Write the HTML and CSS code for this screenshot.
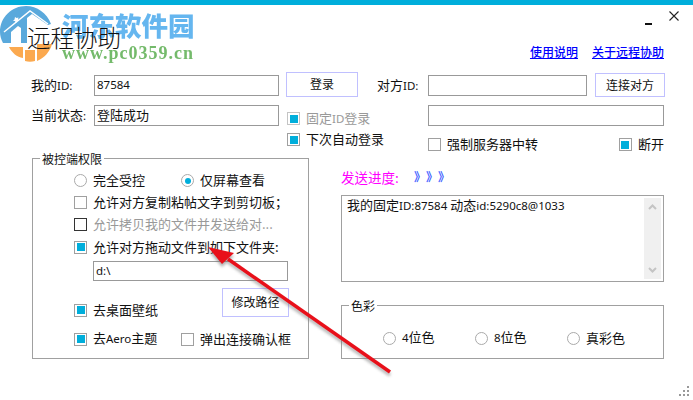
FILE: index.html
```html
<!DOCTYPE html>
<html lang="zh">
<head>
<meta charset="utf-8">
<title>远程协助</title>
<link rel="stylesheet" href="styles.css">
</head>
<body>
<div class="window">
  <div class="topbar"></div>
  <div class="winctl">
    <svg class="ctl-min" width="7" height="2" viewBox="0 0 7 2"><rect width="7" height="2" fill="#111"/></svg>
    <svg class="ctl-close" width="10" height="10" viewBox="0 0 10 10"><path d="M.5.5l9 9M9.500.5l-9 9" stroke="#222" stroke-width="1.100" fill="none"/></svg>
  </div>
  <header class="titlebar">
    <h1 class="title">远程协助</h1>
    <nav class="links"><a class="link" href="#">使用说明</a><a class="link" href="#">关于远程协助</a></nav>
  </header>

  <div class="topform">
    <div class="stack-left">
      <div class="frow">
        <label class="lab lab-left">我的<span class="lat">ID:</span></label>
        <input class="inp inp-left inp-lat" value="87584">
        <button class="btn btn-login">登录</button>
      </div>
      <div class="frow frow-2">
        <label class="lab lab-left">当前状态<span class="lat">:</span></label>
        <input class="inp inp-left" value="登陆成功">
        <div class="checks">
          <div class="opt dim"><span class="box soft on"></span><span>固定<span class="lat">ID</span>登录</span></div>
          <div class="opt"><span class="box on"></span>下次自动登录</div>
        </div>
      </div>
    </div>
    <div class="stack-right">
      <div class="frow">
        <label class="lab lab-right">对方<span class="lat">ID:</span></label>
        <input class="inp inp-peer">
        <button class="btn btn-connect">连接对方</button>
      </div>
      <div class="frow frow-2 indent"><input class="inp inp-wide"></div>
      <div class="force indent">
        <div class="opt"><span class="box"></span>强制服务器中转</div>
        <div class="opt"><span class="box on"></span>断开</div>
      </div>
    </div>
  </div>

  <main class="main">
    <section class="group group-perm">
      <span class="legend">被控端权限</span>
      <div class="prow">
        <div class="opt w107"><span class="radio"></span>完全受控</div>
        <div class="opt"><span class="radio on"></span>仅屏幕查看</div>
      </div>
      <div class="prow"><div class="opt"><span class="box"></span>允许对方复制粘帖文字到剪切板；</div></div>
      <div class="prow"><div class="opt dim"><span class="box dark"></span>允许拷贝我的文件并发送给对...</div></div>
      <div class="prow prow-gap"><div class="opt"><span class="box on"></span>允许对方拖动文件到如下文件夹:</div></div>
      <input class="inp inp-path inp-lat" value="d:\">
      <div class="pathrow">
        <div class="opt opt-low"><span class="box on"></span>去桌面壁纸</div>
        <button class="btn btn-path">修改路径</button>
      </div>
      <div class="prow prow-last">
        <div class="opt w107"><span class="box on"></span><span>去<span class="lat">Aero</span>主题</span></div>
        <div class="opt"><span class="box"></span>弹出连接确认框</div>
      </div>
    </section>

    <div class="side">
      <div class="progress"><span class="progress-label">发送进度:</span><span class="chev">》</span><span class="chev">》</span><span class="chev">》</span></div>
      <div class="log">
        <div class="log-text">我的固定<span class="lat">ID:87584 </span>动态<span class="lat">id:5290c8@1033</span></div>
        <div class="scroll">
          <svg width="9" height="6" viewBox="0 0 9 6"><path d="M1 5l3.500-3.500L8 5" stroke="#c4c4c4" stroke-width="2" fill="none"/></svg>
          <svg width="9" height="6" viewBox="0 0 9 6"><path d="M1 1l3.500 3.500L8 1" stroke="#c4c4c4" stroke-width="2" fill="none"/></svg>
        </div>
      </div>
      <section class="group group-color">
        <span class="legend">色彩</span>
        <div class="opt c92"><span class="radio"></span><span><span class="lat">4</span>位色</span></div>
        <div class="opt c92"><span class="radio"></span><span><span class="lat">8</span>位色</span></div>
        <div class="opt"><span class="radio"></span>真彩色</div>
      </section>
    </div>
  </main>

  <svg class="grip" width="10" height="10" viewBox="0 0 10 10"><path d="M8 0h2v2H8zM4 4h2v2H4zM8 4h2v2H8zM0 8h2v2H0zM4 8h2v2H4zM8 8h2v2H8z" fill="#999"/></svg>

  <div class="watermark">
    <svg class="wm-logo" width="54" height="64" viewBox="0 0 54 64">
      <path d="M3 43C1 39 0 36 0 32 0 17 12 6 26 6c11 0 21 7 25 18l-3 1-16-11-5 4v25z" fill="#5aa9dc"/>
      <path d="M4 32L30 11l18 13" stroke="#fff" stroke-width="1.500" fill="none"/>
      <path d="M11 43V32l7-6 3 2v15z" fill="#fff"/>
      <path d="M15 17l1.500 1 2-.5-.5 2 1 1.500-2 0-1 2-1-2-2 0 1.500-1.500z" fill="#fff"/>
      <path d="M9 47h14v11C17 57 12 53 9 47zM25 50h10v11c-3 1-7 1-10 0zM37 44h15c-2 8-8 14-15 17z" fill="#fba94f"/>
    </svg>
    <div class="wm-text">
      <span class="wm-cn">河东软件园</span>
      <span class="wm-url">www.pc0359.cn</span>
    </div>
  </div>

  <svg class="arrow" width="693" height="400" viewBox="0 0 693 400">
    <defs><filter id="blur" x="-10%" y="-10%" width="120%" height="120%"><feGaussianBlur stdDeviation="1.500"/></filter></defs>
    <g transform="translate(0 3)" filter="url(#blur)" fill="#777" stroke="#777" opacity=".6">
      <path d="M390 372L228 259" stroke-width="3" fill="none"/>
      <path d="M208 247l26 6-12 11z" stroke="none"/>
    </g>
    <path d="M390 372L228 259" stroke="#e8101a" stroke-width="3.500" fill="none"/>
    <path d="M208 247l26 6-12 11z" fill="#e8101a"/>
  </svg>
</div>
</body>
</html>
```

FILE: styles.css
```css
* { box-sizing: border-box; }
html, body { margin: 0; padding: 0; background: #fff; }
body {
  font-family: "Noto Sans CJK SC", "Noto Sans", sans-serif;
  font-size: 13px;
  color: #111;
}
.lat { font-family: "Noto Sans", sans-serif; font-size: 11.500px; }
.window { position: relative; width: 693px; height: 400px; overflow: hidden; }
.topbar { height: 5px; background: #00aedb; }
.winctl { display: flex; align-items: flex-start; justify-content: flex-end; height: 20px; padding: 6px 14px 0 0; gap: 17px; }
.ctl-min { flex: none; margin-top: 12px; }
.titlebar { display: flex; height: 47px; padding-right: 29px; }
.title { position: relative; z-index: 1; margin: -2px 0 0 27px; font-size: 23.500px; font-weight: 300; line-height: 28px; color: #111; }
.links { margin-left: auto; display: flex; gap: 14px; padding-top: 19px; }
.link { font-size: 12px; line-height: 16px; color: #0000ff; text-decoration: underline; font-weight: 500; }

.topform { display: flex; padding-left: 31px; }
.stack-left { flex: none; width: 346px; }
.frow { display: flex; align-items: flex-start; }
.frow-2 { margin-top: 8px; }
.lab { flex: none; display: block; width: 63px; line-height: 21px; margin-top: 2px; white-space: nowrap; }
.lab-right { width: 51px; }
.frow-2 .lab { margin-top: -1px; }
.inp {
  flex: none; display: block; height: 21px; margin: 3px 0 0; padding: 0 2px 3px;
  border: 1px solid #999; background: #fff; color: #111; border-radius: 0;
  font: inherit; outline: 0;
}
.inp-lat { font-family: "Noto Sans", sans-serif; font-size: 11.500px; padding-bottom: 2px; }
.frow-2 .inp { margin-top: 0; }
.inp-left { width: 185px; }
.inp-peer { width: 159px; }
.inp-wide { width: 236px; }
.inp-path { width: 195px; height: 20px; margin: 3px 0 0 19px; }
.btn {
  flex: none; display: block; padding: 0 0 2px; background: #fff; color: #111; border: 1px solid #c0c0ff;
  font: inherit; font-size: 12px; border-radius: 0;
}
.btn-login { width: 72px; height: 25px; margin-left: 7px; }
.btn-connect { width: 70px; height: 24px; margin: 1px 0 0 8px; }
.btn-path { width: 67px; height: 29px; }
.checks { flex: none; margin: 3px 0 0 8px; }
.indent { margin-left: 51px; }
.force { display: flex; justify-content: space-between; width: 236px; margin-top: 8px; }

.opt { display: flex; align-items: center; height: 21px; padding-bottom: 2px; line-height: 19px; white-space: nowrap; }
.dim { color: #999; }
.box, .radio { flex: none; display: block; width: 13px; height: 13px; margin: 2px 6px 0 0; background: #fff; }
.box { border: 1px solid #a0a0a0; padding: 1.500px; background-clip: content-box; }
.box.soft { border-color: #c4c4c4; }
.box.dark { border-color: #333; }
.box.on { background-color: #00aedb; }
.radio { border: 1px solid #aaa; border-radius: 50%; padding: 2.500px; background-clip: content-box; }
.radio.on { background-color: #00aedb; }

.main { display: flex; margin: 3px 0 0 32px; }
.group { position: relative; border: 1px solid #a0a0a0; }
.legend { position: absolute; top: -9px; left: 7px; padding: 0 2px; background: #fff; font-size: 12px; line-height: 18px; }
.group-perm { flex: none; width: 277px; height: 201px; padding: 10px 0 0 41px; }
.prow { display: flex; align-items: center; height: 22px; }
.prow-gap { margin-top: 1px; }
.prow-last { margin-top: 7px; }
.w107 { width: 107px; }
.pathrow { display: flex; height: 33px; margin-top: 7px; }
.opt-low { width: 148px; margin-top: 11px; height: 22px; }

.side { flex: none; width: 323px; margin-left: 32px; }
.progress { display: flex; align-items: center; height: 18px; margin-top: 10px; }
.progress-label { width: 73px; color: #ff00ff; font-size: 13.500px; }
.chev { width: 12px; color: #3f5fff; font-size: 12px; font-weight: 700; line-height: 18px; }
.log { display: flex; height: 87px; margin-top: 9px; padding: 2px; border: 1px solid #a0a0a0; }
.log-text { flex: 1; padding: 0 3px; line-height: 14px; }
.scroll { flex: none; width: 17px; display: flex; flex-direction: column; justify-content: space-between; align-items: center; padding: 6px 0; background: #f0f0f0; }
.scroll svg { display: block; }
.group-color { display: flex; align-items: center; height: 54px; margin-top: 23px; padding: 12px 0 0 41px; }
.c92 { width: 92px; }

.grip { position: absolute; left: 679px; top: 386px; }
.watermark { position: absolute; left: 0; top: 0; display: flex; pointer-events: none; }
.wm-logo { display: block; flex: none; }
.wm-text { display: flex; flex-direction: column; margin: 9px 0 0 8px; opacity: .9; }
.wm-cn { font-weight: 900; font-size: 26.500px; line-height: 32px; color: #55afee; white-space: nowrap; }
.wm-url { font-family: "Liberation Serif", serif; font-weight: 700; font-size: 18px; line-height: 20px; margin-top: 2px; letter-spacing: 1px; color: #66b35c; white-space: nowrap; }
.arrow { position: absolute; left: 0; top: 0; pointer-events: none; }
```
